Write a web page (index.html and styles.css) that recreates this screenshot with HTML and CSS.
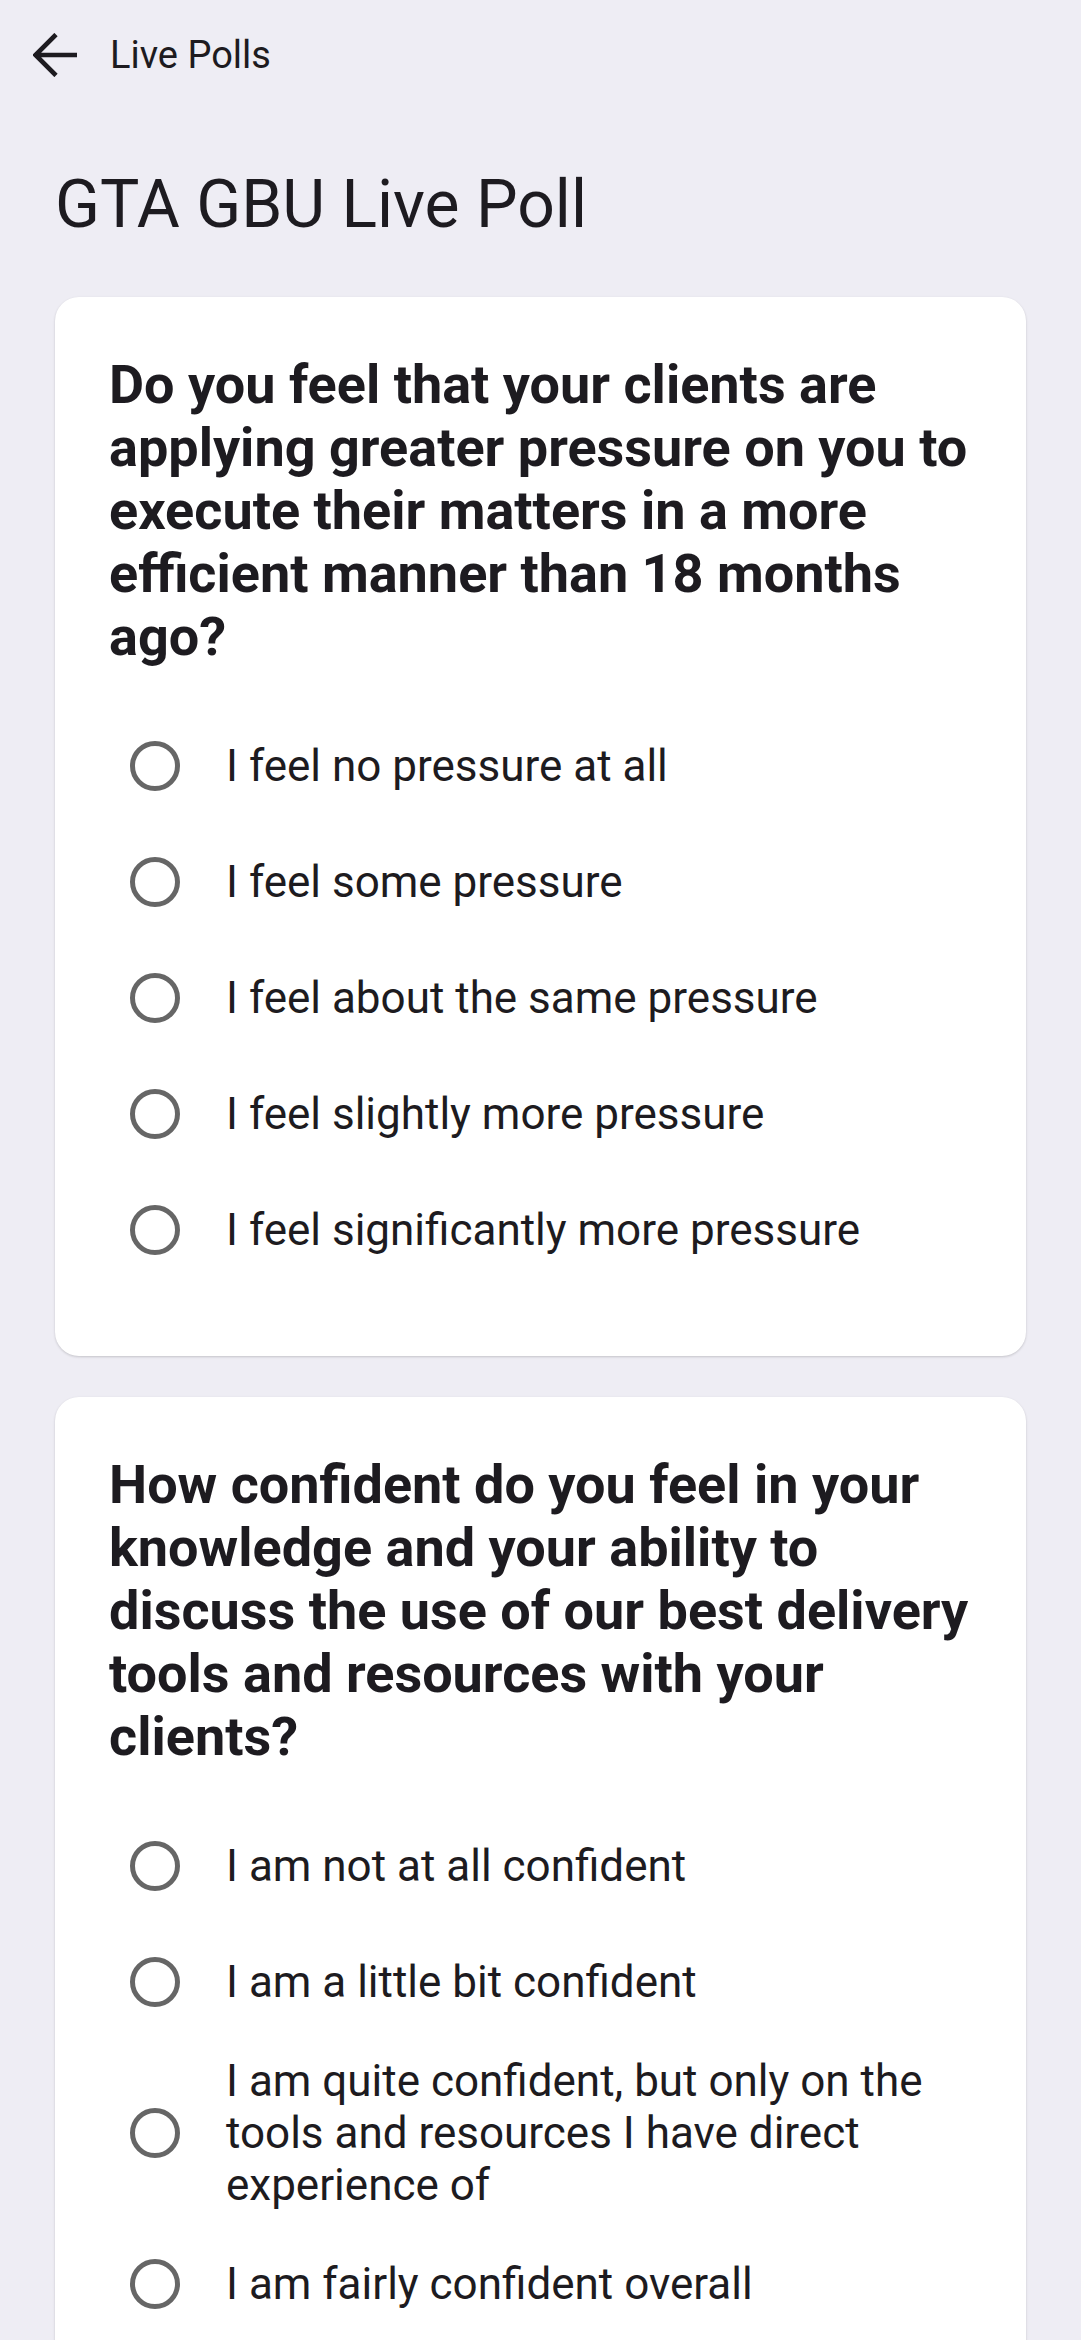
FILE: index.html
```html
<!DOCTYPE html>
<html lang="en">
<head>
    <meta charset="UTF-8">
    <meta name="viewport" content="width=device-width, initial-scale=1.0">
    <title>Live Polls</title>
    <link rel="stylesheet" href="styles.css">
</head>
<body>

    <div class="topbar">
        <button class="back-button" aria-label="Back">
            <svg width="44" height="44" viewBox="0 0 44 44">
                <path d="M44 22H3M23 1.5L2.5 22L23 42.5" fill="none" stroke="#1d1b20" stroke-width="4.6"/>
            </svg>
        </button>
        <span class="topbar-title">Live Polls</span>
    </div>

    <h1 class="page-title">GTA GBU Live Poll</h1>

    <div class="poll-card">
        <h2 class="poll-question">Do you feel that your clients are applying greater pressure on you to execute their matters in a more efficient manner than 18 months ago?</h2>
        <div class="poll-options">
            <label class="poll-option"><span class="radio"></span><span class="option-text">I feel no pressure at all</span></label>
            <label class="poll-option"><span class="radio"></span><span class="option-text">I feel some pressure</span></label>
            <label class="poll-option"><span class="radio"></span><span class="option-text">I feel about the same pressure</span></label>
            <label class="poll-option"><span class="radio"></span><span class="option-text">I feel slightly more pressure</span></label>
            <label class="poll-option"><span class="radio"></span><span class="option-text">I feel significantly more pressure</span></label>
        </div>
    </div>

    <div class="poll-card">
        <h2 class="poll-question">How confident do you feel in your knowledge and your ability to discuss the use of our best delivery tools and resources with your clients?</h2>
        <div class="poll-options">
            <label class="poll-option"><span class="radio"></span><span class="option-text">I am not at all confident</span></label>
            <label class="poll-option"><span class="radio"></span><span class="option-text">I am a little bit confident</span></label>
            <label class="poll-option"><span class="radio"></span><span class="option-text">I am quite confident, but only on the tools and resources I have direct experience of</span></label>
            <label class="poll-option"><span class="radio"></span><span class="option-text">I am fairly confident overall</span></label>
        </div>
    </div>

</body>
</html>
```

FILE: styles.css
```css
body {
    font-family: Roboto, "Noto Sans", Arial, sans-serif;
    margin: 0;
    background-color: #eeedf4;
    color: #1d1b20;
}
.topbar {
    display: flex;
    align-items: center;
    height: 110px;
    padding-left: 33px;
}
.back-button {
    display: flex;
    background: none;
    border: none;
    padding: 0;
    margin-right: 33px;
    cursor: pointer;
}
.topbar-title {
    font-size: 38px;
}
.page-title {
    font-size: 66px;
    font-weight: 400;
    line-height: 78px;
    margin: 56px 0 53px 55px;
}
.poll-card {
    background-color: #fff;
    margin: 0 55px 41px;
    padding: 56px 36px 68px 54px;
    border-radius: 24px;
    box-shadow: 0 1px 3px rgba(0, 0, 0, 0.12), 0 1px 2px rgba(0, 0, 0, 0.06);
}
.poll-question {
    font-size: 54px;
    font-weight: 700;
    line-height: 63px;
    margin: 0 0 40px;
}
.poll-option {
    display: flex;
    align-items: center;
    min-height: 116px;
    box-sizing: border-box;
    padding: 15px 0 15px 21px;
    cursor: pointer;
}
.radio {
    flex: none;
    width: 50px;
    height: 50px;
    box-sizing: border-box;
    border: 5px solid #666;
    border-radius: 50%;
    margin-right: 46px;
}
.option-text {
    font-size: 44px;
    line-height: 52px;
}
```
